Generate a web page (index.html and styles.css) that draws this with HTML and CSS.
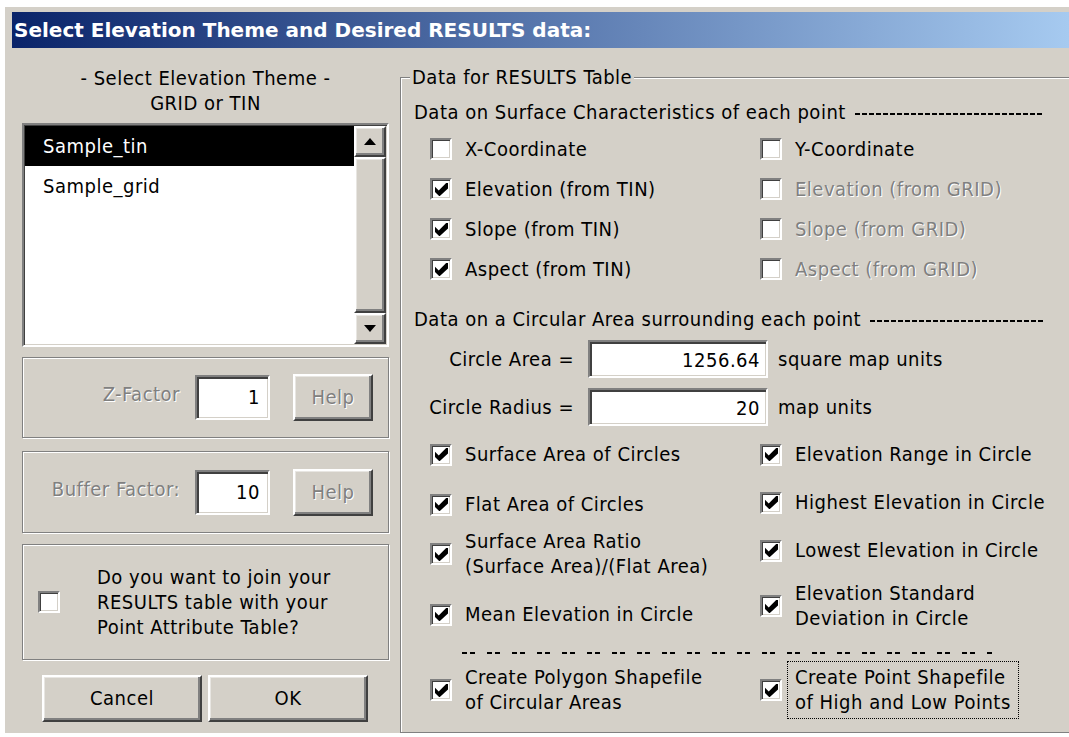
FILE: index.html
```html
<!DOCTYPE html>
<html lang="en">
<head>
<meta charset="utf-8">
<title>Select Elevation Theme</title>
<link rel="stylesheet" href="styles.css">
</head>
<body>
<div class="window">
  <div class="titlebar">Select Elevation Theme and Desired RESULTS data:</div>
  <div class="client">
    <div class="left">
      <div class="theme-head">- Select Elevation Theme -<br>GRID or TIN</div>
      <div class="listbox">
        <ul class="items">
          <li class="selected">Sample_tin</li>
          <li>Sample_grid</li>
        </ul>
        <div class="scrollbar">
          <div class="raised sb-btn"><svg width="12" height="7" viewBox="0 0 12 7"><path d="M6 0 L12 7 L0 7 Z" fill="#000"/></svg></div>
          <div class="raised sb-thumb"></div>
          <div class="raised sb-btn"><svg width="12" height="7" viewBox="0 0 12 7"><path d="M0 0 L12 0 L6 7 Z" fill="#000"/></svg></div>
        </div>
      </div>

      <div class="group factor z-group">
        <span class="factor-label disabled">Z-Factor</span>
        <div class="field small">1</div>
        <div class="raised btn help disabled">Help</div>
      </div>

      <div class="group factor buffer-group">
        <span class="factor-label disabled">Buffer Factor:</span>
        <div class="field small">10</div>
        <div class="raised btn help disabled">Help</div>
      </div>

      <div class="group join">
        <span class="cb"></span>
        <div class="join-text">Do you want to join your<br>RESULTS table with your<br>Point Attribute Table?</div>
      </div>

      <div class="actions">
        <div class="raised btn action">Cancel</div>
        <div class="raised btn action">OK</div>
      </div>
    </div>

    <fieldset class="results">
      <legend>Data for RESULTS Table</legend>
      <div class="results-body">
        <div class="section-head"><span>Data on Surface Characteristics of each point</span><span class="rule"></span></div>
        <div class="check-grid">
          <label class="check"><span class="cb"></span>X-Coordinate</label>
          <label class="check"><span class="cb"></span>Y-Coordinate</label>
          <label class="check"><span class="cb on"><svg viewBox="0 0 7 7"><path d="M0 2 L2 4 L6 0 L7 0 L7 3 L2.6 7 L2.2 7 L0 4.8 Z"/></svg></span>Elevation (from TIN)</label>
          <label class="check disabled"><span class="cb"></span>Elevation (from GRID)</label>
          <label class="check"><span class="cb on"><svg viewBox="0 0 7 7"><path d="M0 2 L2 4 L6 0 L7 0 L7 3 L2.6 7 L2.2 7 L0 4.8 Z"/></svg></span>Slope (from TIN)</label>
          <label class="check disabled"><span class="cb"></span>Slope (from GRID)</label>
          <label class="check"><span class="cb on"><svg viewBox="0 0 7 7"><path d="M0 2 L2 4 L6 0 L7 0 L7 3 L2.6 7 L2.2 7 L0 4.8 Z"/></svg></span>Aspect (from TIN)</label>
          <label class="check disabled"><span class="cb"></span>Aspect (from GRID)</label>
        </div>

        <div class="section-head second"><span>Data on a Circular Area surrounding each point</span><span class="rule"></span></div>
        <div class="measure area">
          <span class="measure-label">Circle Area =</span>
          <div class="field wide">1256.64</div>
          <span class="unit">square map units</span>
        </div>
        <div class="measure radius">
          <span class="measure-label">Circle Radius =</span>
          <div class="field wide">20</div>
          <span class="unit">map units</span>
        </div>

        <div class="check-cols">
          <div class="col">
            <label class="check"><span class="cb on"><svg viewBox="0 0 7 7"><path d="M0 2 L2 4 L6 0 L7 0 L7 3 L2.6 7 L2.2 7 L0 4.8 Z"/></svg></span>Surface Area of Circles</label>
            <label class="check l2"><span class="cb on"><svg viewBox="0 0 7 7"><path d="M0 2 L2 4 L6 0 L7 0 L7 3 L2.6 7 L2.2 7 L0 4.8 Z"/></svg></span>Flat Area of Circles</label>
            <label class="check l3"><span class="cb on"><svg viewBox="0 0 7 7"><path d="M0 2 L2 4 L6 0 L7 0 L7 3 L2.6 7 L2.2 7 L0 4.8 Z"/></svg></span><span>Surface Area Ratio<br>(Surface Area)/(Flat Area)</span></label>
            <label class="check l4"><span class="cb on"><svg viewBox="0 0 7 7"><path d="M0 2 L2 4 L6 0 L7 0 L7 3 L2.6 7 L2.2 7 L0 4.8 Z"/></svg></span>Mean Elevation in Circle</label>
          </div>
          <div class="col">
            <label class="check"><span class="cb on"><svg viewBox="0 0 7 7"><path d="M0 2 L2 4 L6 0 L7 0 L7 3 L2.6 7 L2.2 7 L0 4.8 Z"/></svg></span>Elevation Range in Circle</label>
            <label class="check r2"><span class="cb on"><svg viewBox="0 0 7 7"><path d="M0 2 L2 4 L6 0 L7 0 L7 3 L2.6 7 L2.2 7 L0 4.8 Z"/></svg></span>Highest Elevation in Circle</label>
            <label class="check r3"><span class="cb on"><svg viewBox="0 0 7 7"><path d="M0 2 L2 4 L6 0 L7 0 L7 3 L2.6 7 L2.2 7 L0 4.8 Z"/></svg></span>Lowest Elevation in Circle</label>
            <label class="check r4"><span class="cb on"><svg viewBox="0 0 7 7"><path d="M0 2 L2 4 L6 0 L7 0 L7 3 L2.6 7 L2.2 7 L0 4.8 Z"/></svg></span><span>Elevation Standard<br>Deviation in Circle</span></label>
          </div>
        </div>

        <div class="divider"></div>

        <div class="shape-row">
          <label class="check shape-left"><span class="cb on"><svg viewBox="0 0 7 7"><path d="M0 2 L2 4 L6 0 L7 0 L7 3 L2.6 7 L2.2 7 L0 4.8 Z"/></svg></span><span>Create Polygon Shapefile<br>of Circular Areas</span></label>
          <label class="check"><span class="cb on"><svg viewBox="0 0 7 7"><path d="M0 2 L2 4 L6 0 L7 0 L7 3 L2.6 7 L2.2 7 L0 4.8 Z"/></svg></span><span class="focus">Create Point Shapefile<br>of High and Low Points</span></label>
        </div>
      </div>
    </fieldset>
  </div>
</div>
</body>
</html>
```
FILE: styles.css
```css
* { box-sizing: border-box; }

html, body {
  margin: 0;
  padding: 0;
  background: #fff;
}

body {
  font-family: "DejaVu Sans Condensed", "Liberation Sans", sans-serif;
  font-size: 20px;
  line-height: 25px;
  letter-spacing: 0.5px;
  color: #000;
}

/* dialog frame */
.window {
  margin: 7px 0 0 5px;
  padding: 5px 0 0 7px;
  width: 1064px;
  height: 726px;
  background: #d4d0c8;
  overflow: hidden;
}

.titlebar {
  height: 36px;
  padding-left: 2px;
  background: linear-gradient(to right, #0a246a, #a6caf0);
  color: #fff;
  font-family: "DejaVu Sans", "Liberation Sans", sans-serif;
  font-weight: bold;
  font-size: 20px;
  letter-spacing: 0;
  line-height: 36px;
  white-space: nowrap;
}

.client {
  display: flex;
  align-items: flex-start;
}

/* shared 3D edges */
.raised {
  background: #d4d0c8;
  border: 2px solid;
  border-color: #fff #404040 #404040 #fff;
  box-shadow: inset -2px -2px 0 #808080, inset 1px 1px 0 #e8e6e2;
}

.field {
  background: #fff;
  border: 2px solid;
  border-color: #808080 #fff #fff #808080;
  box-shadow: inset 2px 2px 0 #404040, inset -1px -1px 0 #d4d0c8;
  text-align: right;
  padding-right: 6px;
}

.group {
  border: 1px solid #808080;
  box-shadow: inset 1px 1px 0 #fff, 1px 1px 0 #fff;
}

.disabled {
  color: #808080;
  text-shadow: 1px 1px 0 #fff;
}

/* left column */
.left {
  flex: none;
  width: 386px;
  padding-left: 10px;
  display: flex;
  flex-direction: column;
}

.theme-head {
  width: 367px;
  margin-top: 18px;
  text-align: center;
}

.listbox {
  width: 367px;
  height: 224px;
  margin-top: 7px;
  padding: 1px;
  display: flex;
  background: #fff;
  border: 2px solid;
  border-color: #808080 #fff #fff #808080;
  box-shadow: inset 1px 1px 0 #404040, inset -1px -1px 0 #d4d0c8;
}

.items {
  flex: 1;
  margin: 0;
  padding: 0;
  list-style: none;
}

.items li {
  height: 40px;
  line-height: 40px;
  padding-left: 18px;
}

.items li.selected {
  background: #000;
  color: #fff;
}

.scrollbar {
  flex: none;
  width: 32px;
  display: flex;
  flex-direction: column;
}

.sb-btn {
  height: 31px;
  display: flex;
  align-items: center;
  justify-content: center;
}

.sb-thumb {
  flex: 1;
}

.factor {
  width: 367px;
  display: flex;
  align-items: center;
}

.z-group {
  height: 81px;
  margin-top: 10px;
}

.buffer-group {
  height: 82px;
  margin-top: 13px;
}

.factor-label {
  width: 157px;
  margin-right: 15px;
  margin-bottom: 6px;
  text-align: right;
}

.field.small {
  width: 75px;
  height: 45px;
  line-height: 41px;
  padding-right: 8px;
}

.btn {
  display: flex;
  align-items: center;
  justify-content: center;
}

.help {
  width: 80px;
  height: 47px;
  margin-left: 23px;
}

.join {
  width: 367px;
  height: 116px;
  margin-top: 11px;
  display: flex;
  align-items: center;
}

.join .cb {
  margin-left: 15px;
  margin-right: 37px;
}

.actions {
  margin-top: 15px;
  padding-left: 20px;
  display: flex;
  gap: 6px;
}

.action {
  width: 160px;
  height: 47px;
}

/* checkboxes */
.cb {
  flex: none;
  width: 22px;
  height: 22px;
  background: #fff;
  border: 2px solid;
  border-color: #808080 #fff #fff #808080;
  box-shadow: inset 1px 1px 0 #404040, inset -1px -1px 0 #d4d0c8;
  display: flex;
  align-items: center;
  justify-content: center;
}

.cb svg {
  width: 13px;
  height: 13px;
  fill: #000;
}

.check {
  display: flex;
  align-items: center;
  white-space: nowrap;
}

.check .cb {
  margin-right: 13px;
}

/* results group */
.results {
  flex: none;
  width: 700px;
  height: 668px;
  margin: 17px 0 0 2px;
  padding: 0;
  min-width: 0;
  border: 1px solid #808080;
  box-shadow: inset 1px 1px 0 #fff, 1px 1px 0 #fff;
}

.results legend {
  margin-left: 9px;
  padding: 0 2px;
  line-height: 25px;
  background: #d4d0c8;
}

.results-body {
  padding-left: 13px;
}

.section-head {
  width: 629px;
  margin-top: 10px;
  display: flex;
  align-items: center;
  white-space: nowrap;
}

.section-head.second {
  margin-top: 18px;
}

/* dashed leader after a section title */
.section-head .rule {
  flex: 1;
  height: 2px;
  margin: 3px 0 0 9px;
  background: repeating-linear-gradient(to right, #000 0 5px, transparent 5px 7px);
}

.check-grid {
  margin-top: 4px;
  padding-left: 16px;
  display: grid;
  grid-template-columns: 330px 300px;
  grid-auto-rows: 40px;
  align-items: center;
}

.measure {
  display: flex;
  align-items: center;
}

.measure.area {
  margin-top: 8px;
}

.measure.radius {
  margin-top: 10px;
}

.measure-label {
  width: 160px;
  margin-right: 14px;
  text-align: right;
}

.field.wide {
  width: 180px;
  height: 38px;
  line-height: 36px;
}

.unit {
  margin-left: 10px;
}

.check-cols {
  margin-top: 16px;
  padding-left: 16px;
  display: flex;
}

.col {
  width: 330px;
  display: flex;
  flex-direction: column;
  align-items: flex-start;
}

.l2 { margin-top: 25px; }
.l3 { margin-top: 12px; }
.l4 { margin-top: 23px; }
.r2 { margin-top: 23px; }
.r3 { margin-top: 23px; }
.r4 { margin-top: 18px; }

.divider {
  width: 533px;
  height: 2px;
  margin: 21px 0 0 48px;
  background: repeating-linear-gradient(to right, #000 0 5px, transparent 5px 8px, #000 8px 13px, transparent 13px 25px);
}

.shape-row {
  margin-top: 7px;
  padding-left: 16px;
  display: flex;
  align-items: center;
  height: 58px;
}

.shape-left {
  width: 330px;
}

.focus {
  margin-left: -8px;
  padding: 3px 7px;
  border: 1px dotted #000;
}
```
